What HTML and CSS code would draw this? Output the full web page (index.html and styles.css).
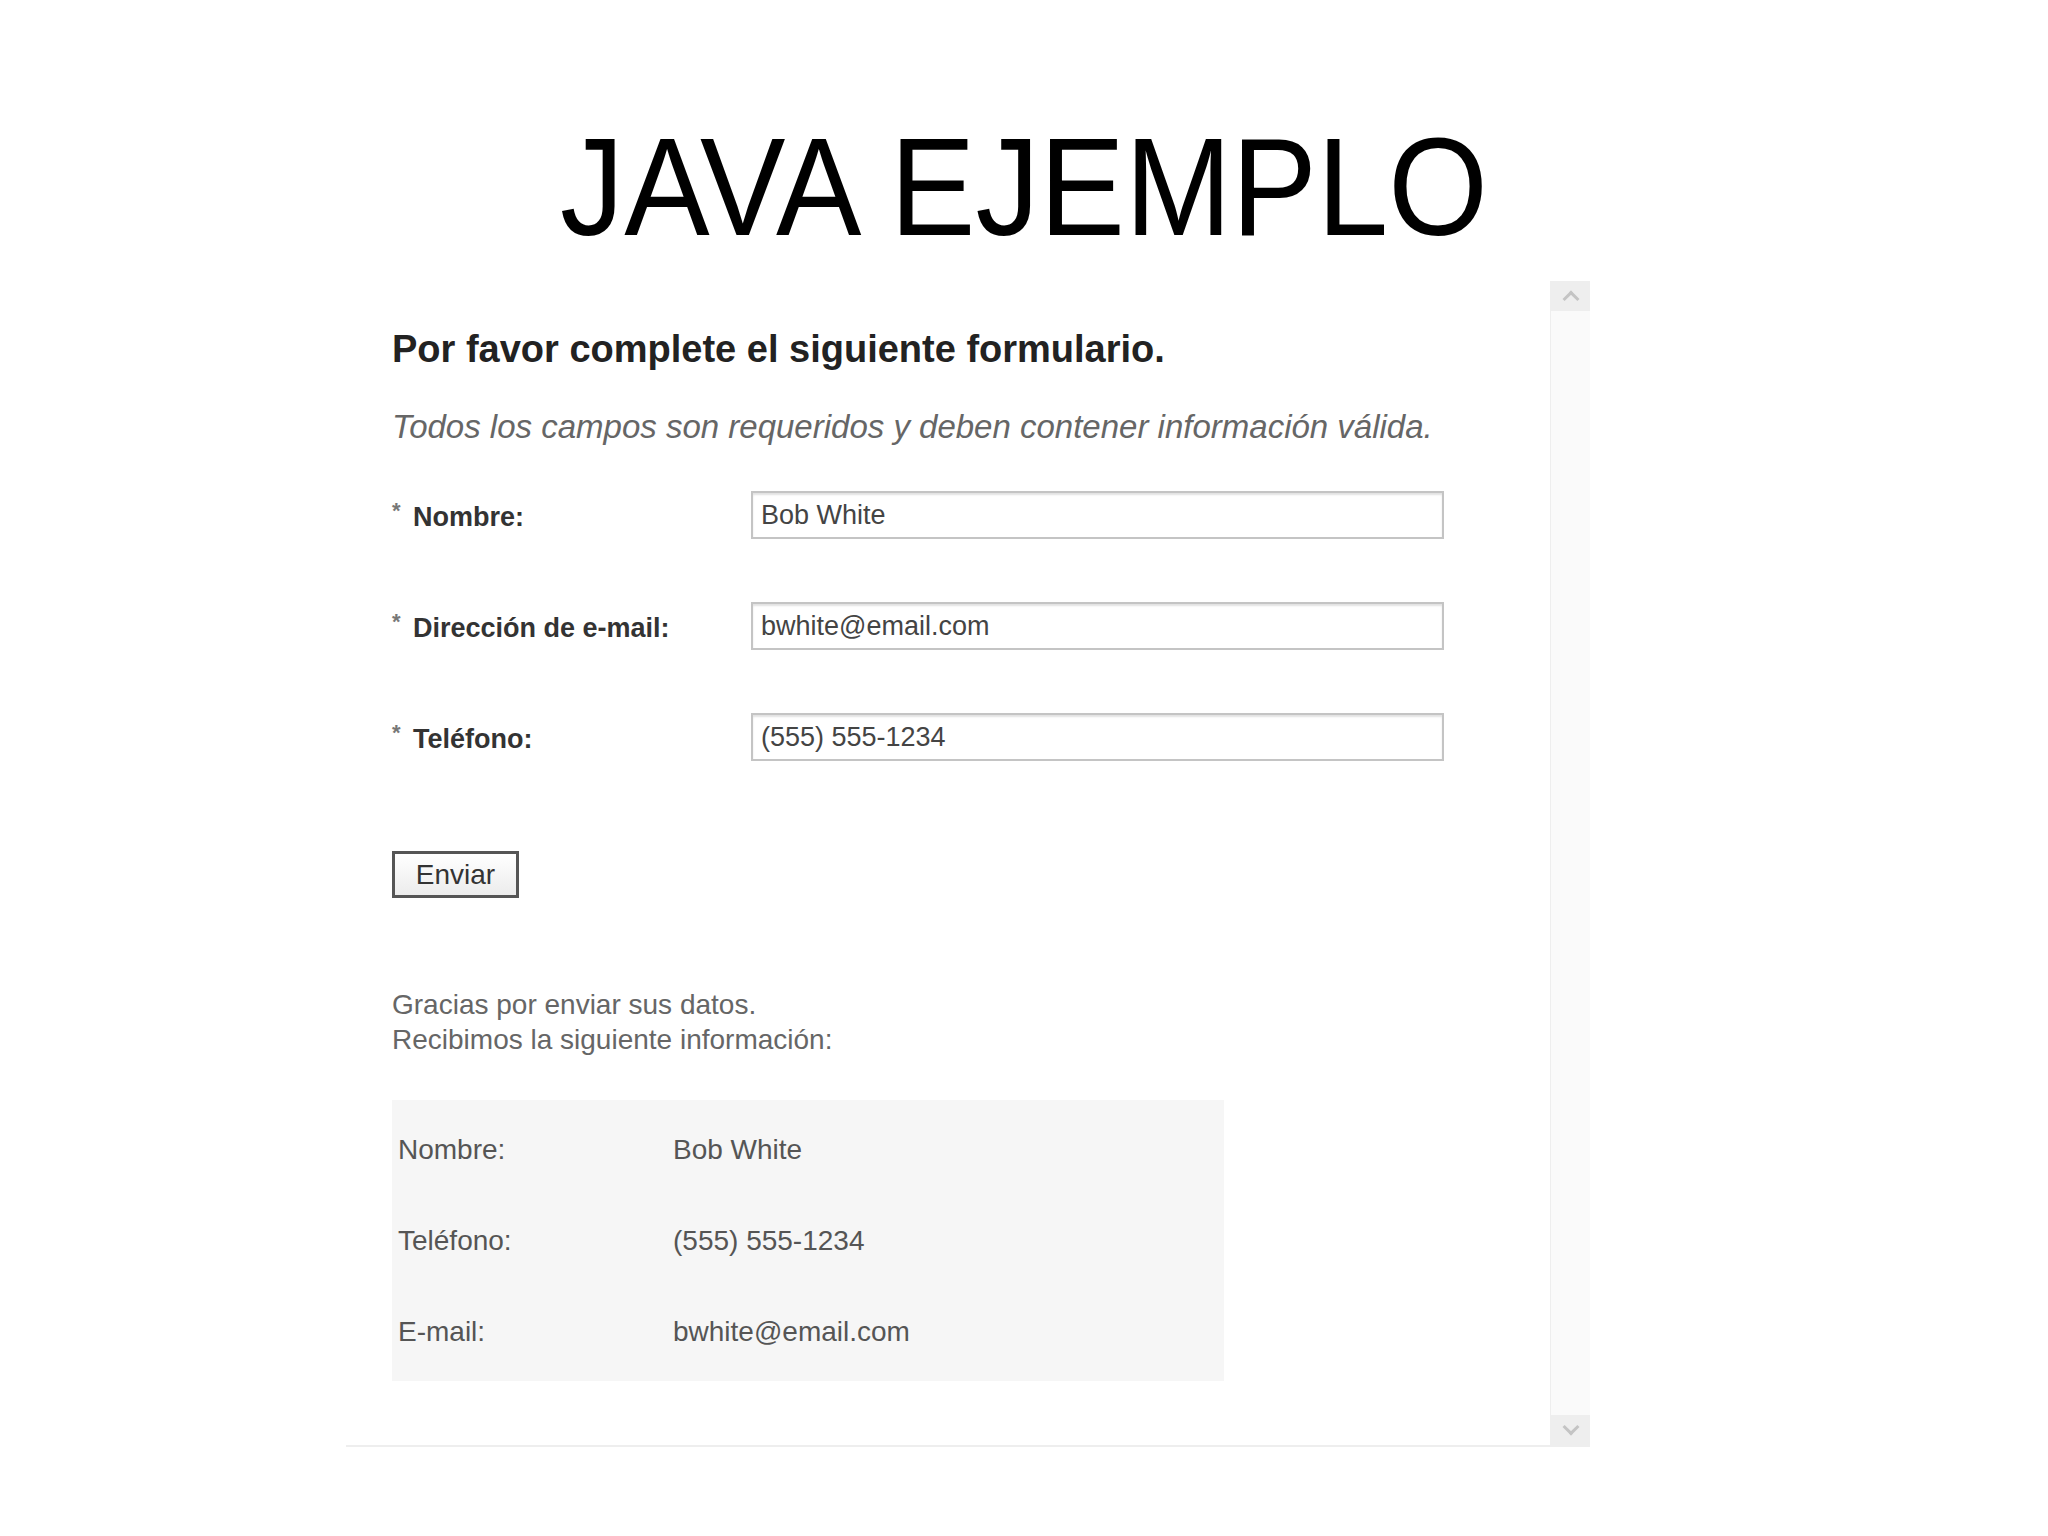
FILE: index.html
```html
<!DOCTYPE html>
<html lang="es">
<head>
  <meta charset="UTF-8">
  <title>Java ejemplo</title>
  <link rel="stylesheet" href="styles.css">
</head>
<body>
  <h1 class="slide-title"><span>JAVA EJEMPLO</span></h1>

  <div class="shot">
    <div class="shot-body">
      <h2>Por favor complete el siguiente formulario.</h2>
      <p class="hint">Todos los campos son requeridos y deben contener información válida.</p>

      <form class="form" onsubmit="return false">
        <div class="row">
          <label><sup>*</sup>Nombre:</label>
          <input type="text" value="Bob White">
        </div>
        <div class="row">
          <label><sup>*</sup>Dirección de e-mail:</label>
          <input type="text" value="bwhite@email.com">
        </div>
        <div class="row">
          <label><sup>*</sup>Teléfono:</label>
          <input type="text" value="(555) 555-1234">
        </div>
        <button type="submit">Enviar</button>
      </form>

      <p class="thanks">Gracias por enviar sus datos.<br>Recibimos la siguiente información:</p>

      <table class="summary">
        <tr><td>Nombre:</td><td>Bob White</td></tr>
        <tr><td>Teléfono:</td><td>(555) 555-1234</td></tr>
        <tr><td>E-mail:</td><td>bwhite@email.com</td></tr>
      </table>
    </div>

    <div class="scrollbar">
      <span class="arrow up"></span>
      <span class="track"></span>
      <span class="arrow down"></span>
    </div>
  </div>
</body>
</html>
```

FILE: styles.css
```css
* {
  margin: 0;
  padding: 0;
  box-sizing: border-box;
}

body {
  font-family: "Liberation Sans", Arial, sans-serif;
  background: #fff;
  color: #000;
}

/* slide heading */
.slide-title {
  margin-top: 117px;
  height: 140px;
  font-size: 140px;
  font-weight: 400;
  line-height: 1;
  text-align: center;
}

.slide-title span {
  display: inline-block;
  transform: scaleX(0.915);
}

/* browser window capture */
.shot {
  display: flex;
  width: 1244px;
  height: 1166px;
  margin: 24px 0 0 346px;
  border-bottom: 2px solid #eeeeee;
}

.shot-body {
  flex: 1;
  padding: 46px 0 0 46px;
}

.shot-body h2 {
  font-size: 38px;
  line-height: 44px;
  font-weight: 700;
  color: #222;
}

.hint {
  margin-top: 37px;
  font-size: 33px;
  line-height: 38px;
  font-style: italic;
  color: #666;
}

.form {
  margin-top: 45px;
}

.row {
  display: flex;
  align-items: center;
  height: 48px;
  margin-bottom: 63px;
}

.row label {
  width: 359px;
  font-size: 27px;
  font-weight: 700;
  color: #333;
}

.row label sup {
  display: inline-block;
  width: 21px;
  font-size: 22px;
  color: #777;
  vertical-align: 8px;
}

.row input {
  width: 693px;
  height: 48px;
  padding: 0 8px;
  border: 2px solid #c4c4c4;
  box-shadow: inset 0 2px 2px #e2e2e2;
  font-family: inherit;
  font-size: 27px;
  color: #444;
  background: #fff;
}

.form button {
  display: block;
  width: 127px;
  height: 47px;
  margin-top: 90px;
  border: 3px solid #555;
  background: linear-gradient(#ffffff, #ececec);
  font-family: inherit;
  font-size: 28px;
  color: #333;
  cursor: pointer;
}

.thanks {
  margin-top: 89px;
  font-size: 28px;
  line-height: 35px;
  color: #666;
}

.summary {
  margin-top: 43px;
  width: 832px;
  border-collapse: collapse;
  background: #f6f6f6;
  font-size: 28px;
  color: #555;
}

.summary td {
  height: 91px;
  padding: 0;
  vertical-align: middle;
}

.summary tr:first-child td {
  height: 95px;
  padding-top: 4px;
}

.summary tr:last-child td {
  height: 95px;
  padding-bottom: 4px;
}

.summary td:first-child {
  width: 281px;
  padding-left: 6px;
}

/* vertical scrollbar on the right of the capture */
.scrollbar {
  display: flex;
  flex-direction: column;
  width: 40px;
  border-left: 1px solid #eeeeee;
  background: #fafafa;
}

.scrollbar .track {
  flex: 1;
}

.scrollbar .arrow {
  position: relative;
  height: 30px;
  background: #eeeeee;
}

.scrollbar .arrow::after {
  content: '';
  position: absolute;
  left: 14px;
  width: 9px;
  height: 9px;
  border-left: 3px solid #c4c4c4;
  border-top: 3px solid #c4c4c4;
}

.scrollbar .up::after {
  top: 12px;
  transform: rotate(45deg);
}

.scrollbar .down::after {
  top: 6px;
  transform: rotate(225deg);
}
```
